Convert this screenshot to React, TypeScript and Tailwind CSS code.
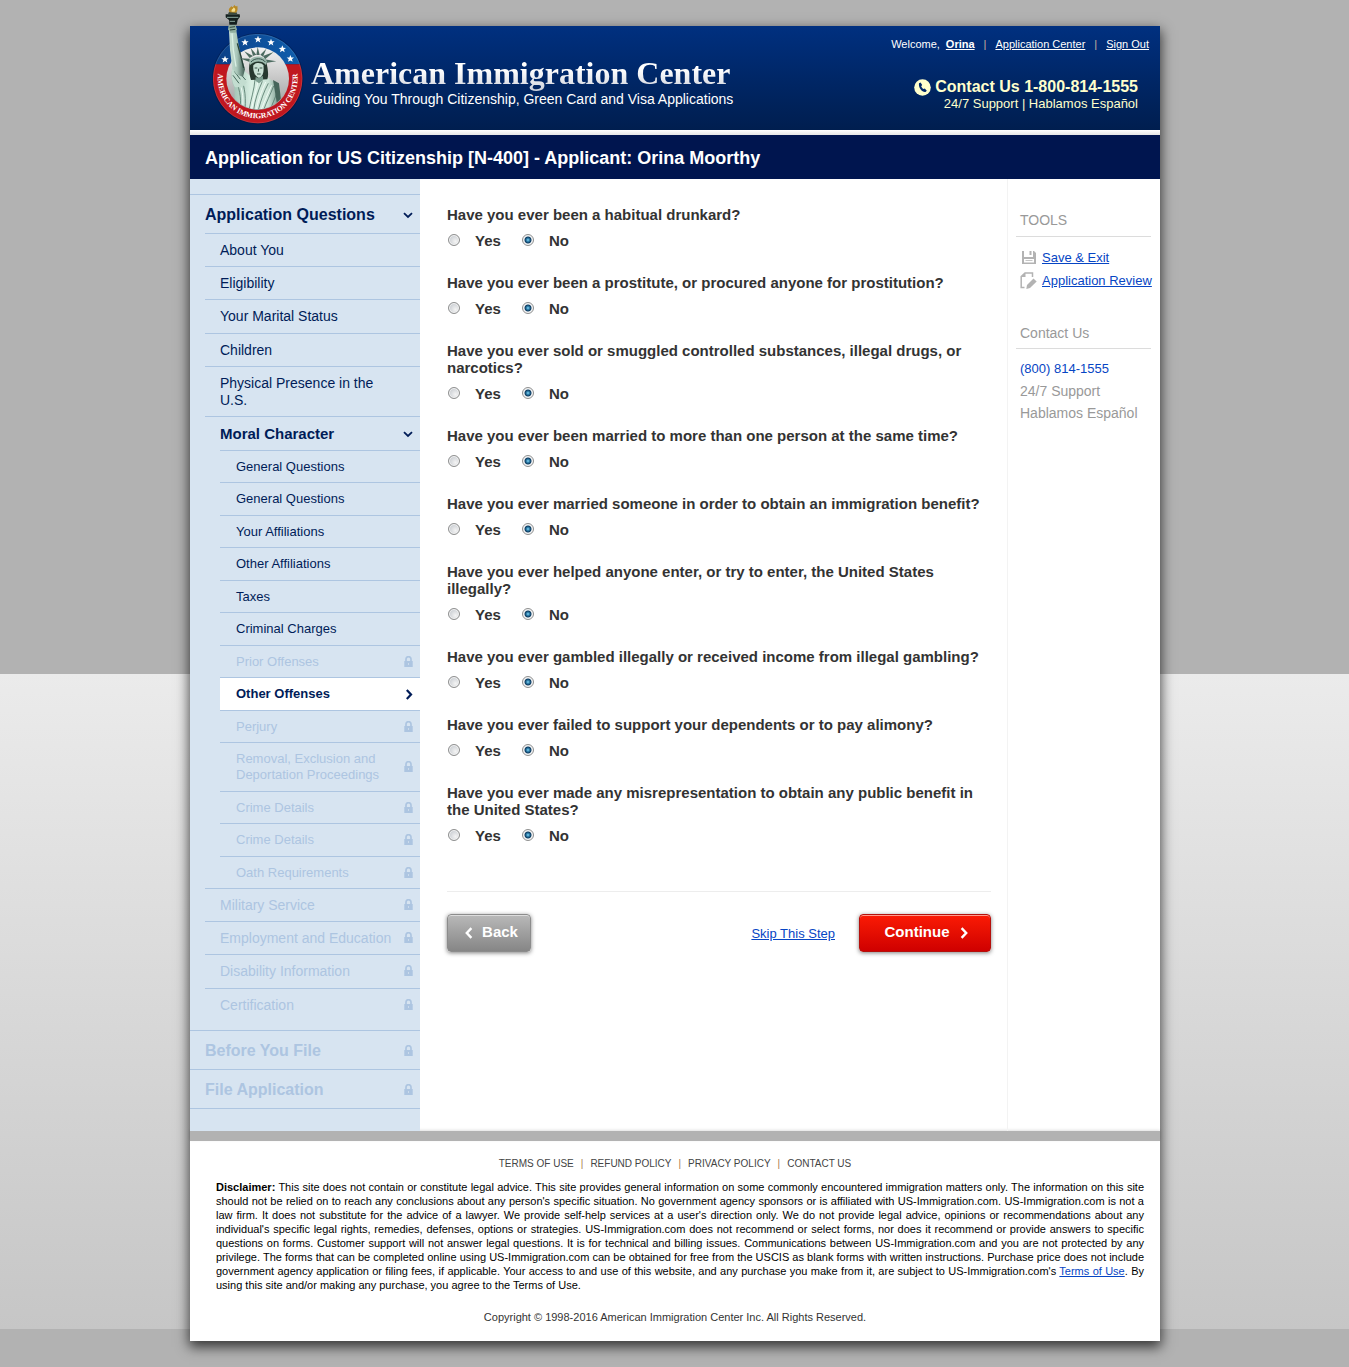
import React from "react";

function cx(...parts: (string | false | undefined)[]) {
  return parts.filter(Boolean).join(" ");
}

function Lock() {
  return (
    <svg viewBox="0 0 9 11" className="mb-[2px] w-[9px] h-[11px] shrink-0 text-[#adc5e1]" aria-hidden="true">
      <path d="M2 5.5V3.2a2.5 2.5 0 0 1 5 0v2.3" fill="none" stroke="currentColor" strokeWidth="1.7" />
      <rect x="0.3" y="5" width="8.4" height="6" fill="currentColor" />
      <rect x="4" y="7.3" width="1" height="1.4" fill="#d7e4f1" />
    </svg>
  );
}

function ChevronDown() {
  return (
    <svg viewBox="0 0 10 10" className="w-[10px] h-[10px] shrink-0" aria-hidden="true">
      <path d="M1 3.2L5 7L9 3.2" fill="none" stroke="#001c58" strokeWidth="1.8" />
    </svg>
  );
}

function ChevronRight({ className, color }: { className: string; color: string }) {
  return (
    <svg viewBox="0 0 8 12" className={className} aria-hidden="true">
      <path d="M1.6 1.2L6.2 6L1.6 10.8" fill="none" stroke={color} strokeWidth="2.4" />
    </svg>
  );
}

const STAR = "M0-11L3-3.6L11-3.2L4.8 1.8L7 9.6L0 5.2L-7 9.6L-4.8 1.8L-11-3.2L-3-3.6Z";
const STARS = [
  [60, 178],
  [120, 127],
  [159, 118],
  [198, 127],
  [232, 147],
  [256, 176],
];

function LibertyLogo() {
  return (
    <svg viewBox="0 0 315 390" className="w-[105px] h-[130px] shrink-0" role="img" aria-label="American Immigration Center">
      <defs>
        <linearGradient id="disc" x1="0" y1="0" x2="0" y2="1">
          <stop offset="0" stopColor="#f2f2f2" />
          <stop offset="1" stopColor="#9b9b9b" />
        </linearGradient>
        <linearGradient id="blueRing" x1="0" y1="0" x2="1" y2="0">
          <stop offset="0" stopColor="#0b3f86" />
          <stop offset="1" stopColor="#0f5fae" />
        </linearGradient>
        <linearGradient id="robe" x1="0" y1="0" x2="1" y2="0">
          <stop offset="0" stopColor="#9bbfb0" />
          <stop offset="0.4" stopColor="#d9efe3" />
          <stop offset="0.75" stopColor="#cde4d8" />
          <stop offset="1" stopColor="#6c8f82" />
        </linearGradient>
        <linearGradient id="arm" x1="0" y1="0" x2="1" y2="0">
          <stop offset="0" stopColor="#c9e0d5" />
          <stop offset="0.5" stopColor="#a9c6b9" />
          <stop offset="1" stopColor="#3d5a50" />
        </linearGradient>
        <clipPath id="inner">
          <path d="M40 0H270V236H250A92 92 0 0 1 66 236H40Z" />
        </clipPath>
        <path id="ringPath" d="M40.600 210A120 120 0 1 0 275.400 210" />
      </defs>
      <circle cx="158" cy="236" r="137" fill="#00122f" opacity="0.35" />
      <path d="M31 193A134 134 0 0 1 285 193Z" fill="url(#blueRing)" />
      <path d="M31 193A134 134 0 1 0 285 193Z" fill="#c0171f" />
      <circle cx="158" cy="236" r="133" fill="none" stroke="#ffffff" strokeOpacity="0.18" strokeWidth="2" />
      <circle cx="158" cy="236" r="94" fill="url(#disc)" />
      {STARS.map(([x, y]) => (
        <path key={x} d={STAR} transform={`translate(${x} ${y})`} fill="#fff" />
      ))}
      <text fill="#fff" fontFamily="'Liberation Serif', serif" fontWeight="700" fontSize="23">
        <textPath href="#ringPath" startOffset="50%" textAnchor="middle">
          AMERICAN IMMIGRATION CENTER
        </textPath>
      </text>
      <g clipPath="url(#inner)">
        <path d="M96 190C112 205 128 226 146 232L184 232C204 240 217 252 221 272L226 340H90L88 262C78 245 78 215 84 200Z" fill="url(#robe)" />
        <path d="M92 235C100 262 112 290 104 330M104 226C116 250 124 280 120 328M150 238C148 268 138 296 132 330M172 244C158 276 150 300 146 330M190 250C176 276 168 300 160 330M206 258C196 284 184 306 176 330M216 276C210 296 202 312 196 328" fill="none" stroke="#55786b" strokeWidth="2.5" />
        <path d="M98 232C108 258 118 284 112 330M160 240C154 270 146 296 139 330M182 246C168 276 160 300 153 330M200 256C188 282 178 304 168 330" fill="none" stroke="#effaf3" strokeWidth="3" />
        <path d="M84 200C90 214 104 222 114 236L126 246L112 262L90 262C80 246 76 218 84 200Z" fill="#c3ddd0" />
        <path d="M88 214L106 238M84 226L102 250M100 214L122 240" stroke="#45685b" strokeWidth="3" />
        <path d="M204 240L222 250L228 300L216 312Z" fill="#46665b" />
      </g>
      <path d="M72 92L94 92L100 130L108 165L120 208L114 230L96 224L82 206L75 150Z" fill="url(#arm)" />
      <path d="M97 130L108 170L116 204" stroke="#263f37" strokeWidth="4" fill="none" />
      <path d="M81 100L85 150L93 200" stroke="#d9efe4" strokeWidth="4" fill="none" />
      <path d="M71 76L91 74L96 88L92 98L76 98L69 88Z" fill="#8fae9f" />
      <path d="M74 82L90 80M75 90L91 88" stroke="#2c4239" strokeWidth="3" />
      <path d="M62 43L104 43L105 50L98 60L95 74L73 74L72 60L62 52Z" fill="#15201f" />
      <path d="M66 52L100 52M74 64H90" stroke="#8ba79d" strokeWidth="3" />
      <path d="M68 44L98 44L94 36L72 36Z" fill="#3c4a3f" />
      <path d="M74 37C68 28 74 24 80 18C80 23 85 22 88 14C90 19 95 20 97 17C98 26 99 32 93 38Z" fill="#b98a24" />
      <path d="M80 35C78 28 84 28 86 22C90 26 93 28 89 35Z" fill="#f6df8d" />
      <g fill="#4c6b60">
        <path d="M134 176L104 175L134 186Z" />
        <path d="M134 174L118 154L144 168Z" />
        <path d="M144 168L137 144L154 164Z" />
        <path d="M154 165L158 140L164 165Z" />
        <path d="M166 164L184 146L174 170Z" />
        <path d="M174 168L206 156L180 178Z" />
        <path d="M178 178L214 184L178 190Z" />
      </g>
      <path d="M135 186C140 168 178 166 184 186C188 204 192 224 187 238L138 240C132 220 130 200 135 186Z" fill="#26382f" />
      <path d="M132 184C140 166 176 164 186 184L183 195C172 181 148 181 136 195Z" fill="#9cbbae" />
      <path d="M138 186C148 173 172 173 181 186" stroke="#35504a" strokeWidth="3" fill="none" />
      <path d="M145 196C151 187 170 187 175 196C178 214 174 229 162 234C150 230 143 214 145 196Z" fill="#c8e0d4" />
      <path d="M149 204L157 204M164 204L172 204M156 222L167 222M161 206L160 215" stroke="#3a564b" strokeWidth="3" />
      <path d="M152 231L151 242L162 250L175 240L173 227L162 235Z" fill="#7d9f91" />
    </svg>
  );
}

type Sub = { label: string; state?: "locked" | "current" };
type Item = Sub & { children?: Sub[] };

const MORAL: Sub[] = [
  { label: "General Questions" },
  { label: "General Questions" },
  { label: "Your Affiliations" },
  { label: "Other Affiliations" },
  { label: "Taxes" },
  { label: "Criminal Charges" },
  { label: "Prior Offenses", state: "locked" },
  { label: "Other Offenses", state: "current" },
  { label: "Perjury", state: "locked" },
  { label: "Removal, Exclusion and Deportation Proceedings", state: "locked" },
  { label: "Crime Details", state: "locked" },
  { label: "Crime Details", state: "locked" },
  { label: "Oath Requirements", state: "locked" },
];

const ITEMS: Item[] = [
  { label: "About You" },
  { label: "Eligibility" },
  { label: "Your Marital Status" },
  { label: "Children" },
  { label: "Physical Presence in the U.S." },
  { label: "Moral Character", children: MORAL },
  { label: "Military Service", state: "locked" },
  { label: "Employment and Education", state: "locked" },
  { label: "Disability Information", state: "locked" },
  { label: "Certification", state: "locked" },
];

function SubItem({ label, state }: Sub) {
  const locked = state === "locked";
  const current = state === "current";
  return (
    <li
      className={cx(
        "flex items-center justify-between border-t border-[#adc5e1] pl-4 pr-[7px] pt-2 pb-[7px] even:pb-2 text-[13px] leading-4",
        locked && "text-[#adc5e1]",
        current && "bg-white font-bold"
      )}
    >
      {locked ? (
        <span className="max-w-[150px]">{label}</span>
      ) : (
        <a href="#" aria-current={current ? "page" : undefined}>
          {label}
        </a>
      )}
      {locked && <Lock />}
      {current && <ChevronRight className="w-2 h-[11px] shrink-0" color="#001c58" />}
    </li>
  );
}

function NavItem({ item, index }: { item: Item; index: number }) {
  const locked = item.state === "locked";
  return (
    <li className="border-t border-[#adc5e1]">
      <div
        className={cx(
          "flex items-center justify-between pl-[15px] pr-[7px] pt-2",
          index % 3 === 2 ? "pb-2" : "pb-[7px]",
          locked && "text-[#adc5e1]",
          item.children ? "text-[15px] leading-[17px] font-bold" : "text-sm leading-[17px]"
        )}
      >
        {locked ? (
          <span>{item.label}</span>
        ) : (
          <a href="#" className="max-w-[165px]">
            {item.label}
          </a>
        )}
        {locked && <Lock />}
        {item.children && <ChevronDown />}
      </div>
      {item.children && (
        <ul className="ml-[15px]">
          {item.children.map((s, i) => (
            <SubItem key={i} {...s} />
          ))}
        </ul>
      )}
    </li>
  );
}

function Sidebar() {
  return (
    <nav className="w-[230px] shrink-0 bg-[#d7e4f1] pt-[15px] pb-[22px] text-[#001c58]" aria-label="Application steps">
      <div className="flex h-[39px] items-center justify-between border-t border-[#adc5e1] pt-[2px] pl-[15px] pr-[7px]">
        <a href="#" className="text-base font-bold">
          Application Questions
        </a>
        <ChevronDown />
      </div>
      <ul className="ml-[15px] pb-[9px]">
        {ITEMS.map((item, i) => (
          <NavItem key={item.label} item={item} index={i} />
        ))}
      </ul>
      <div className="border-b border-[#adc5e1] text-base font-bold text-[#adc5e1]">
        {["Before You File", "File Application"].map((t) => (
          <div key={t} className="flex h-[39px] items-center justify-between border-t border-[#adc5e1] pt-[2px] pl-[15px] pr-[7px]">
            <span>{t}</span>
            <Lock />
          </div>
        ))}
      </div>
    </nav>
  );
}

const QUESTIONS = [
  "Have you ever been a habitual drunkard?",
  "Have you ever been a prostitute, or procured anyone for prostitution?",
  "Have you ever sold or smuggled controlled substances, illegal drugs, or narcotics?",
  "Have you ever been married to more than one person at the same time?",
  "Have you ever married someone in order to obtain an immigration benefit?",
  "Have you ever helped anyone enter, or try to enter, the United States illegally?",
  "Have you ever gambled illegally or received income from illegal gambling?",
  "Have you ever failed to support your dependents or to pay alimony?",
  "Have you ever made any misrepresentation to obtain any public benefit in the United States?",
];

const RADIO =
  "m-0 mb-[2px] ml-px mr-[15px] size-3 shrink-0 appearance-none rounded-full border border-[#8e8f8f] bg-[radial-gradient(circle_at_65%_65%,#f4f4f4_0%,#c9cdd2_75%)] shadow-[inset_0_0_0_1px_#f4f4f4] checked:bg-[radial-gradient(circle_at_50%_50%,#b5e4f7_0px,#3e9bc8_1px,#0d3b60_3px,#f0f2f4_4px)]";

function Question({ text, index }: { text: string; index: number }) {
  return (
    <fieldset className="mb-[25px]">
      <legend className="pb-[9px]">{text}</legend>
      <div className="flex">
        {["Yes", "No"].map((v) => (
          <label key={v} className="flex w-[74px] items-center">
            <input type="radio" name={`q${index}`} value={v} defaultChecked={v === "No"} className={RADIO} />
            {v}
          </label>
        ))}
      </div>
    </fieldset>
  );
}

export default function App() {
  return (
    <div className="min-h-screen bg-[#b2b2b2] bg-[linear-gradient(#b2b2b2_674px,#ebebeb_674px,#c6c6c6_1329px,#b2b2b2_1329px)] pt-[26px] pb-[26px] pl-px font-['Liberation_Sans',Arial,sans-serif]">
      <div className="mx-auto w-full max-w-[970px] bg-white shadow-[0_5px_12px_1px_rgba(0,0,0,0.7)]">
        <header className="flex h-[104px] justify-between bg-linear-to-b from-[#003080] to-[#001e4f] pl-[15px] pr-[11px] text-white">
          <a href="#" className="flex items-start gap-px">
            <span className="-mt-[26px]">
              <LibertyLogo />
            </span>
            <span className="block pt-[29px]">
              <span className="block bg-linear-to-b from-white from-40% to-[#cdd2dc] bg-clip-text font-['Liberation_Serif',serif] text-[32px] leading-9 font-bold text-transparent">
                American Immigration Center
              </span>
              <span className="block pl-px text-sm leading-4">
                Guiding You Through Citizenship, Green Card and Visa Applications
              </span>
            </span>
          </a>
          <div className="text-right">
            <div className="flex items-center justify-end pt-[11px] text-[11px] leading-[14px]">
              <span className="mr-[6px]">Welcome,</span>
              <a href="#" className="font-bold underline">Orina</a>
              <span className="mx-[9px] text-[#c9b3a0]">|</span>
              <a href="#" className="underline">Application Center</a>
              <span className="mx-[9px] text-[#c9b3a0]">|</span>
              <a href="#" className="underline">Sign Out</a>
            </div>
            <div className="pt-[27px] pr-[11px] text-[#ffffcc]">
              <div className="flex items-center justify-end gap-1 text-base leading-[18px] font-bold">
                <svg viewBox="0 0 17 17" className="size-[17px]" aria-hidden="true">
                  <circle cx="8.500" cy="8.500" r="8.300" fill="#ffffcc" />
                  <path d="M5 4.300L6.600 3.400L8.200 6L7.200 7.200C7.600 8.400 8.400 9.400 9.400 10L10.800 9.500L12.800 11.800L11.500 13C8.500 13.600 4.200 9 5 4.300Z" fill="#00276a" />
                </svg>
                Contact Us 1-800-814-1555
              </div>
              <div className="text-[13px] leading-4">24/7 Support | Hablamos Español</div>
            </div>
          </div>
        </header>
        <div className="h-[5px] bg-linear-to-b from-white to-[#e6e6e6]" />
        <h1 className="bg-[#00154f] px-[15px] pt-3 pb-[10px] text-lg leading-[22px] font-bold text-white">
          Application for US Citizenship [N-400] - Applicant: Orina Moorthy
        </h1>

        <div className="flex">
          <Sidebar />
          <main className="min-w-0 flex-1 pt-[27px] pr-4 pl-[27px] text-[15px] leading-[17px] font-bold text-[#333]">
            <form onSubmit={(e) => e.preventDefault()}>
              {QUESTIONS.map((q, i) => (
                <Question key={q} text={q} index={i} />
              ))}
              <div className="mt-[47px] flex items-center border-t border-[#ededed] pt-[22px]">
                <button
                  type="button"
                  className="flex h-[38px] w-[84px] items-center justify-center gap-[9px] rounded-[4px] border border-[#8c8c8c] bg-linear-to-b from-[#b9b9b9] to-[#868686] pb-[3px] pl-[5px] text-white shadow-[inset_0_1px_0_#dcdcdc,0_1px_4px_rgba(0,0,0,0.5)]"
                >
                  <ChevronRight className="mt-[2px] h-[14px] w-2 rotate-180" color="#fff" />
                  Back
                </button>
                <a href="#" className="mr-6 ml-auto text-[13px] font-normal text-[#0645c4] underline">
                  Skip This Step
                </a>
                <button
                  type="submit"
                  className="flex h-[38px] w-[132px] items-center justify-center gap-[10px] rounded-[4px] border border-[#b5100c] bg-linear-to-b from-[#fb1a05] to-[#cf0000] pb-[3px] pl-[2px] text-white shadow-[inset_0_1px_0_#ff9a8c,0_1px_4px_rgba(0,0,0,0.5)]"
                >
                  Continue
                  <ChevronRight className="mt-[2px] h-[14px] w-2" color="#fff" />
                </button>
              </div>
            </form>
          </main>
          <aside className="w-[153px] shrink-0 border-l border-[#f3f3f3] pt-[33px] pr-[9px] pl-2 text-sm text-[#999]">
            <h2 className="border-b border-[#dcdcdc] pb-[7px] pl-1 leading-[17px]">TOOLS</h2>
            <ul className="mt-[9px] text-[13px] leading-[23px]">
              <li className="flex items-center gap-[5px] pl-1 whitespace-nowrap">
                <svg viewBox="0 0 17 17" className="size-[17px] shrink-0" fill="#b3b3b3" aria-hidden="true">
                  <path d="M2 2H4V8H13V2H14L16 4V15H2Z M4 10V13.500H14V10Z" fillRule="evenodd" />
                  <path d="M9.500 2H11.500V6H9.500Z M5.500 11.200H12.500V12H5.500Z" />
                </svg>
                <a href="#" className="text-[#0645c4] underline">Save &amp; Exit</a>
              </li>
              <li className="flex items-center gap-[5px] pl-1 whitespace-nowrap">
                <svg viewBox="0 0 17 17" className="size-[17px] shrink-0" aria-hidden="true">
                  <path d="M4.500 15.500H1.200V4.500L5 1H12.500V5" fill="none" stroke="#b3b3b3" strokeWidth="1.500" />
                  <path d="M1 5L5.500 0.800V5Z" fill="#b3b3b3" />
                  <path d="M13.500 6.500L16.700 9.500L10 16L6.300 17L7 13Z" fill="#b3b3b3" />
                </svg>
                <a href="#" className="text-[#0645c4] underline">Application Review</a>
              </li>
            </ul>
            <h2 className="mt-[33px] border-b border-[#dcdcdc] pb-[6px] pl-1 leading-[17px]">Contact Us</h2>
            <div className="mt-[9px] pl-1 leading-[22px]">
              <a href="#" className="block text-[13px] text-[#0645c4]">(800) 814-1555</a>
              <div>24/7 Support</div>
              <div>Hablamos Español</div>
            </div>
          </aside>
        </div>

        <div className="h-[10px] bg-[#b2b2b2] shadow-[0_-1px_3px_rgba(0,0,0,0.12)]" />
        <footer className="px-[26px] pt-4 pb-[17px] text-[11px] leading-[14px] text-black">
          <ul className="flex justify-center text-[10px] text-[#444]">
            {["TERMS OF USE", "REFUND POLICY", "PRIVACY POLICY", "CONTACT US"].map((t, i) => (
              <li key={t}>
                {i > 0 && <span className="mx-[7px] text-[#a87a4a]">|</span>}
                <a href="#">{t}</a>
              </li>
            ))}
          </ul>
          <p className="-mr-[10px] pt-[9px] text-justify">
            <b>Disclaimer:</b> This site does not contain or constitute legal advice. This site provides general
            information on some commonly encountered immigration matters only. The information on this site should not
            be relied on to reach any conclusions about any person's specific situation. No government agency sponsors
            or is affiliated with US-Immigration.com. US-Immigration.com is not a law firm. It does not substitute for
            the advice of a lawyer. We provide self-help services at a user's direction only. We do not provide legal
            advice, opinions or recommendations about any individual's specific legal rights, remedies, defenses,
            options or strategies. US-Immigration.com does not recommend or select forms, nor does it recommend or
            provide answers to specific questions on forms. Customer support will not answer legal questions. It is for
            technical and billing issues. Communications between US-Immigration.com and you are not protected by any
            privilege. The forms that can be completed online using US-Immigration.com can be obtained for free from the
            USCIS as blank forms with written instructions. Purchase price does not include government agency
            application or filing fees, if applicable. Your access to and use of this website, and any purchase you make
            from it, are subject to US-Immigration.com's{" "}
            <a href="#" className="text-[#0645c4] underline">Terms of Use</a>. By using this site and/or making any
            purchase, you agree to the Terms of Use.
          </p>
          <p className="pt-[18px] text-center text-[#333]">
            Copyright © 1998-2016 American Immigration Center Inc. All Rights Reserved.
          </p>
        </footer>
      </div>
    </div>
  );
}
